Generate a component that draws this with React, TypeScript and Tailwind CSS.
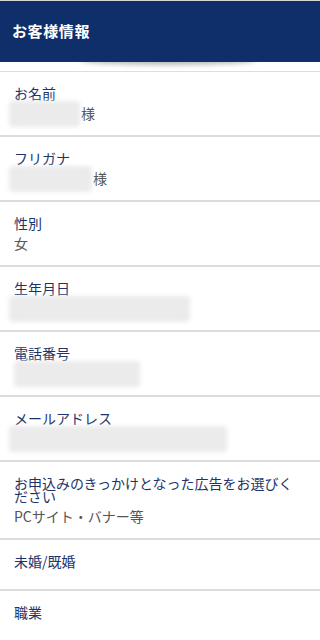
import React from "react";

type Row = {
  label: string;
  value?: string;
  blur?: number;
  inset?: boolean;
  suffix?: string;
};

const ROWS: Row[] = [
  { label: "お名前", blur: 71, suffix: "様" },
  { label: "フリガナ", blur: 83, suffix: "様" },
  { label: "性別", value: "女" },
  { label: "生年月日", blur: 181 },
  { label: "電話番号", blur: 126, inset: true },
  { label: "メールアドレス", blur: 218 },
  { label: "お申込みのきっかけとなった広告をお選びください", value: "PCサイト・バナー等" },
  { label: "未婚/既婚" },
  { label: "職業" },
];

function Blur({ w, inset }: { w: number; inset?: boolean }) {
  return (
    <span
      className={
        "h-[26px] shrink-0 rounded-sm bg-[#ebebeb] blur-[2px] " + (inset ? "ml-0" : "-ml-[5px]")
      }
      style={{ width: w }}
    />
  );
}

function InfoRow({ row }: { row: Row }) {
  const hasValue = row.value !== undefined || row.blur !== undefined;
  return (
    <div className="border-b-2 border-[#dcdcdc] px-[14px] pt-[15px] pb-[13px]">
      <div className="text-[14px] leading-[13px] text-[#1c3468]">{row.label}</div>
      {hasValue ? (
        <div className="mt-[5px] flex h-[17px] items-center text-[14px] leading-[17px] text-[#555]">
          {row.blur !== undefined && <Blur w={row.blur} inset={row.inset} />}
          {row.suffix && <span className="ml-[1px]">{row.suffix}</span>}
          {row.value && <span>{row.value}</span>}
        </div>
      ) : (
        <div className="h-[8px]" />
      )}
    </div>
  );
}

export default function App() {
  return (
    <div
      className="min-h-[640px] w-[320px] overflow-hidden bg-white"
      style={{ fontFamily: '"Noto Sans CJK JP", "Noto Sans", sans-serif' }}
    >
      <div className="relative border-t border-[#d6d6d6]">
        <div className="absolute left-[80px] top-[50px] h-[10px] w-[176px] rounded-[50%] shadow-[0_4px_5px_rgba(0,0,0,0.28)]" />
        <div className="relative z-10 flex h-[61px] items-center bg-[#0f2f6b] px-[12px]">
          <h1 className="text-[15px] font-bold tracking-[0.6px] text-white">お客様情報</h1>
        </div>
        <div className="h-[9px]" />
      </div>
      <div className="border-t border-[#dedede]">
        {ROWS.map((r) => (
          <InfoRow key={r.label} row={r} />
        ))}
      </div>
    </div>
  );
}
